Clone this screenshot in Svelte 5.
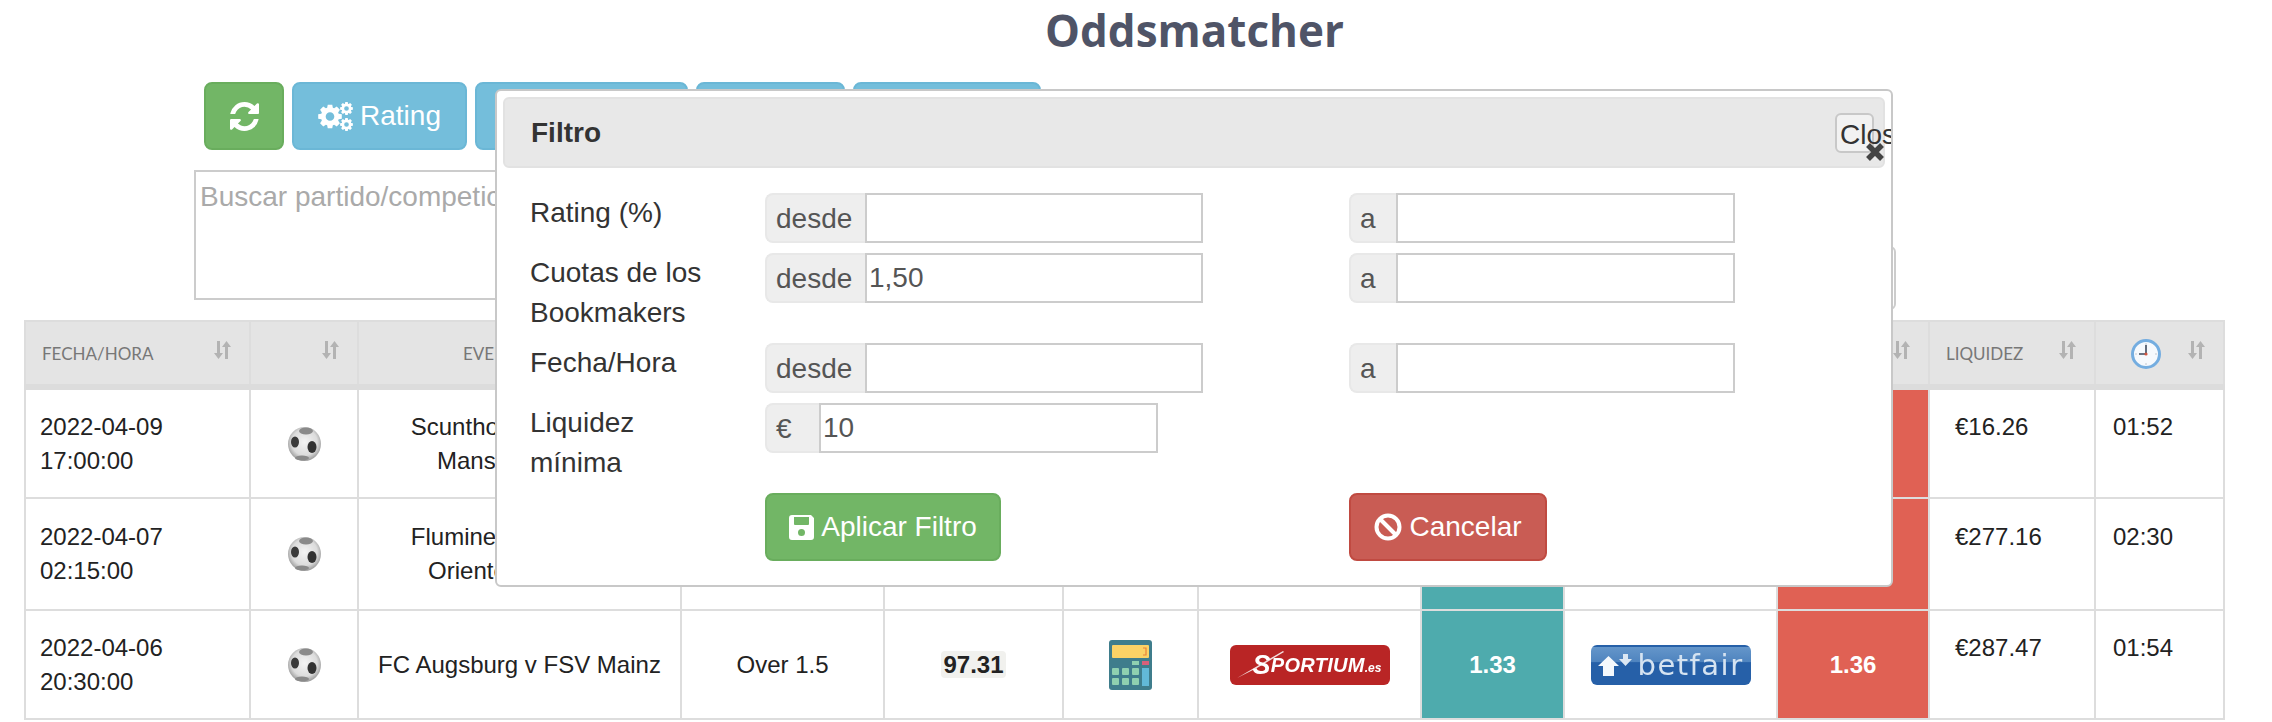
<script>
  const columns = [
    { label: 'Fecha/Hora', align: 'left' },
    { label: '', align: 'left' },
    { label: 'Evento', align: 'center' },
    { label: 'Mercado', align: 'center' },
    { label: 'Rating', align: 'center' },
    { label: '', align: 'center' },
    { label: 'Bookmaker', align: 'center' },
    { label: 'Cuota', align: 'center' },
    { label: 'Exchange', align: 'center' },
    { label: 'Cuota', align: 'center' },
    { label: 'Liquidez', align: 'left' },
    { label: 'clock', align: 'center' }
  ];

  const rows = [
    { date: '2022-04-09', time: '17:00:00', event: 'Scunthorpe United v Mansfield Town', market: 'Over 1.5', rating: '96.84', back: '1.30', lay: '1.34', liquidity: '€16.26', left: '01:52' },
    { date: '2022-04-07', time: '02:15:00', event: 'Fluminense FC RJ v Oriente Petrolero', market: 'Over 1.5', rating: '97.02', back: '1.29', lay: '1.33', liquidity: '€277.16', left: '02:30' },
    { date: '2022-04-06', time: '20:30:00', event: 'FC Augsburg v FSV Mainz', market: 'Over 1.5', rating: '97.31', back: '1.33', lay: '1.36', liquidity: '€287.47', left: '01:54' }
  ];

  const filters = [
    { label: 'Rating (%)', from: '', to: '' },
    { label: 'Cuotas de los Bookmakers', from: '1,50', to: '' },
    { label: 'Fecha/Hora', from: '', to: '' }
  ];

  // cog outline with a round hole, used by the Rating button
  function gear(cx, cy, r, teeth) {
    const pts = [];
    const step = (Math.PI * 2) / teeth;
    for (let i = 0; i < teeth; i++) {
      const a = i * step;
      const w = step * 0.24;
      const inner = r * 0.76;
      pts.push([a - step / 2 + w * 0.4, inner], [a - w, r], [a + w, r], [a + step / 2 - w * 0.4, inner]);
    }
    const d = pts
      .map(([a, rad], i) => `${i ? 'L' : 'M'}${(cx + Math.cos(a) * rad).toFixed(2)} ${(cy + Math.sin(a) * rad).toFixed(2)}`)
      .join('');
    const h = r * 0.36;
    return `${d}ZM${cx - h} ${cy}a${h} ${h} 0 1 0 ${h * 2} 0a${h} ${h} 0 1 0 ${-h * 2} 0Z`;
  }

  const refreshPath =
    'M1639 1056q0 5-1 7-64 268-268 434.5t-478 166.5q-146 0-282.5-55t-243.5-157l-129 129q-19 19-45 19t-45-19-19-45v-448q0-26 19-45t45-19h448q26 0 45 19t19 45-19 45l-137 137q71 66 161 102t187 36q134 0 250-65t186-179q11-17 53-117 8-23 30-23h192q13 0 22.5 9.5t9.5 22.5zm25-800v448q0 26-19 45t-45 19h-448q-26 0-45-19t-19-45 19-45l138-138q-148-137-349-137-134 0-250 65t-186 179q-11 17-53 117-8 23-30 23h-199q-13 0-22.5-9.5t-9.5-22.5v-7q65-268 270-434.5t480-166.5q146 0 284 55.5t245 156.5l130-129q19-19 45-19t45 19 19 45z';
</script>

{#snippet sortIcon()}
  <svg class="sort" viewBox="0 0 17 18" aria-hidden="true">
    <path d="M3 0h3v12h3l-4.5 6L0 12h3z" />
    <path d="M11 18h3V6h3L12.500 0 8 6h3z" />
  </svg>
{/snippet}

{#snippet clock()}
  <svg class="clock" viewBox="0 0 30 30" aria-hidden="true">
    <circle cx="15" cy="15" r="13.500" fill="#f6f9fd" stroke="#74ade0" stroke-width="3" />
    <path d="M15 4v2M15 24v2M4 15h2M24 15h2" stroke="#c4c8cf" stroke-width="1" />
    <path d="M15 6v9H8" fill="none" stroke="#3f4a5c" stroke-width="1.600" />
    <circle cx="15" cy="15" r="1.600" fill="#d2553f" />
  </svg>
{/snippet}

{#snippet ball()}
  <svg class="ball" viewBox="0 0 33 34" aria-hidden="true">
    <defs>
      <radialGradient id="ballShade" cx="50%" cy="45%" r="55%">
        <stop offset="0%" stop-color="#f4f4f4" />
        <stop offset="70%" stop-color="#dcdcdc" />
        <stop offset="100%" stop-color="#9a9a9a" />
      </radialGradient>
    </defs>
    <ellipse cx="16.500" cy="17" rx="16.500" ry="17" fill="url(#ballShade)" />
    <ellipse cx="18" cy="4" rx="7" ry="3.500" fill="#8a8a8a" />
    <ellipse cx="7" cy="15" rx="4" ry="5.500" fill="#3a3a3a" />
    <ellipse cx="24" cy="20" rx="4.500" ry="6" fill="#333" />
    <ellipse cx="14" cy="31" rx="7" ry="2.500" fill="#8a8a8a" />
  </svg>
{/snippet}

{#snippet calculator()}
  <svg class="calc" viewBox="0 0 43 50" aria-hidden="true">
    <rect width="43" height="50" rx="3" fill="#3f7d8c" />
    <rect x="3" y="5" width="37" height="13" rx="1" fill="#fbd266" />
    <path d="M34 8h3v7h-3" fill="none" stroke="#e8833a" stroke-width="1.200" />
    <rect x="23" y="21" width="7" height="4" fill="#8fd0b0" />
    <rect x="33" y="21" width="7" height="4" fill="#d9607a" />
    {#each [0, 1] as row}
      {#each [0, 1, 2] as col}
        <rect x={3 + col * 10} y={28 + row * 10} width="7" height="7" rx="1" fill="#8fd0b0" />
      {/each}
    {/each}
    <rect x="33" y="28" width="7" height="18" fill="#62b9d8" />
  </svg>
{/snippet}

<div class="page">
  <h1>Oddsmatcher</h1>

  <div class="toolbar">
    <button class="btn btn-green refresh" type="button" aria-label="Actualizar">
      <svg class="icon-refresh" viewBox="128 128 1536 1536" aria-hidden="true"><path d={refreshPath} /></svg>
    </button>
    <button class="btn btn-blue rating" type="button">
      <svg class="icon-cogs" viewBox="0 0 35 29" aria-hidden="true">
        <path fill-rule="evenodd" d={gear(12, 14.500, 12, 8)} />
        <path fill-rule="evenodd" d={gear(28.500, 6.500, 6.500, 8)} />
        <path fill-rule="evenodd" d={gear(28.500, 22.500, 6.500, 8)} />
      </svg>
      Rating
    </button>
    <button class="btn btn-blue bookies" type="button">Bookmakers</button>
    <button class="btn btn-blue filter" type="button">Filtro</button>
    <button class="btn btn-blue export" type="button">Exportar</button>
  </div>

  <div class="search">
    <textarea placeholder="Buscar partido/competición"></textarea>
    <div class="search-side"></div>
  </div>

  <table>
    <thead>
      <tr>
        {#each columns as col}
          <th class={col.align}>
            {#if col.label === 'clock'}
              {@render clock()}
            {:else}
              {col.label}
            {/if}
            {@render sortIcon()}
          </th>
        {/each}
      </tr>
    </thead>
    <tbody>
      {#each rows as row}
        <tr>
          <td>{row.date}<br />{row.time}</td>
          <td class="center mid">{@render ball()}</td>
          <td class="center mid event">{row.event}</td>
          <td class="center mid">{row.market}</td>
          <td class="center mid"><b class="score">{row.rating}</b></td>
          <td class="center mid">{@render calculator()}</td>
          <td class="center mid">
            <span class="logo sportium">
              <svg viewBox="0 0 48 28" aria-hidden="true"><path d="M0 28 46 1l1 1L20 18z" fill="#f3dede" /></svg>
              <i class="big-s">S</i><i>PORTIUM</i><small>.es</small>
            </span>
          </td>
          <td class="center mid odds back">{row.back}</td>
          <td class="center mid">
            <span class="logo betfair">
              <svg viewBox="0 0 34 22" aria-hidden="true">
                <path d="M0 12 10.500 2 21 12h-5v10H5V12z" fill="#f4f8fc" />
                <path d="M25 0h5v5h4l-6.500 7L21 5h4z" fill="#dbe7f3" />
              </svg>
              <span>betfair</span>
            </span>
          </td>
          <td class="center mid odds lay">{row.lay}</td>
          <td>{row.liquidity}</td>
          <td>{row.left}</td>
        </tr>
      {/each}
    </tbody>
  </table>

  <div class="modal">
    <header>
      <span>Filtro</span>
      <button class="close" type="button">Close</button>
      <svg class="close-x" viewBox="0 0 20 20" aria-hidden="true">
        <path d="M3 3l14 14M17 3L3 17" stroke="#444" stroke-width="5.500" />
      </svg>
    </header>
    <form class="fields">
      {#each filters as f}
        <span class="field-label">{f.label}</span>
        <div class="group from">
          <span class="addon">desde</span>
          <input type="text" value={f.from} />
        </div>
        <div class="group to">
          <span class="addon">a</span>
          <input type="text" value={f.to} />
        </div>
      {/each}
      <span class="field-label">Liquidez mínima</span>
      <div class="group liquidity">
        <span class="addon">€</span>
        <input type="text" value="10" />
      </div>
      <span></span>
      <span></span>
      <button class="btn btn-green apply" type="button">
        <svg class="icon-save" viewBox="0 0 25 25" aria-hidden="true">
          <path fill-rule="evenodd" d="M3 0h19l3 3v19a3 3 0 0 1-3 3H3a3 3 0 0 1-3-3V3a3 3 0 0 1 3-3zM5 2v7a1 1 0 0 0 1 1h13a1 1 0 0 0 1-1V2zM12.500 14a3.500 3.500 0 1 0 0 7a3.500 3.500 0 0 0 0-7z" />
        </svg>
        Aplicar Filtro
      </button>
      <button class="btn btn-red cancel" type="button">
        <svg class="icon-ban" viewBox="0 0 28 28" aria-hidden="true">
          <circle cx="14" cy="14" r="11.500" fill="none" stroke="#fff" stroke-width="4" />
          <path d="M6 6l16 16" stroke="#fff" stroke-width="4" />
        </svg>
        Cancelar
      </button>
    </form>
  </div>
</div>

<style>
  :global(body) {
    margin: 0;
    background: #fff;
  }
  .page {
    position: relative;
    width: 2272px;
    height: 722px;
    overflow: hidden;
    font-family: "Liberation Sans", Arial, sans-serif;
    font-size: 28px;
    line-height: 40px;
    color: #333;
  }
  h1 {
    margin: 0;
    padding: 6px 0 27px 117px;
    height: 49px;
    text-align: center;
    font-family: "Open Sans", sans-serif;
    font-size: 44px;
    line-height: 49px;
    font-weight: 700;
    color: #4f5467;
  }
  .toolbar {
    display: flex;
    gap: 8px;
    padding-left: 204px;
    height: 68px;
  }
  .btn {
    display: inline-flex;
    align-items: center;
    justify-content: center;
    gap: 7px;
    height: 68px;
    padding: 0;
    box-sizing: border-box;
    border: 2px solid transparent;
    border-radius: 8px;
    font: inherit;
    color: #fff;
  }
  .btn-green {
    background: #72b666;
    border-color: #69ad5d;
  }
  .btn-blue {
    background: #74bedb;
    border-color: #6bb7d6;
  }
  .btn-red {
    background: #c95c54;
    border-color: #c04a41;
  }
  .refresh { width: 80px; }
  .rating { width: 175px; }
  .bookies { width: 213px; }
  .filter { width: 149px; }
  .export { width: 188px; }
  .icon-refresh {
    width: 29px;
    height: 29px;
    fill: #fff;
  }
  .icon-cogs {
    width: 35px;
    height: 29px;
    fill: #fff;
  }
  .search {
    display: flex;
    gap: 24px;
    margin: 20px 0 0 194px;
    width: 1702px;
    height: 130px;
  }
  textarea {
    flex: 1;
    box-sizing: border-box;
    height: 130px;
    padding: 5px 4px;
    border: 2px solid #ccc;
    border-radius: 0;
    resize: none;
    font: inherit;
  }
  textarea::placeholder {
    color: #aaa;
    opacity: 1;
  }
  .search-side {
    width: 300px;
    height: 64px;
    margin-top: 76px;
    box-sizing: border-box;
    border: 2px solid #ccc;
    border-radius: 6px;
  }
  table {
    margin: 20px 0 0 24px;
    width: 2199px;
    table-layout: fixed;
    border-collapse: collapse;
    font-size: 24px;
    line-height: 34px;
    color: #222;
  }
  th, td {
    box-sizing: border-box;
    border: 2px solid #dddddd;
    padding: 20px 16px 19px;
    text-align: left;
    vertical-align: top;
  }
  tr:nth-child(2) td {
    padding-top: 21px;
    padding-bottom: 21px;
  }
  th {
    position: relative;
    height: 66px;
    padding: 2px 16px 0;
    background: #e4e4e4;
    border-bottom: 6px solid #dcdcdc;
    font-family: Lato, sans-serif;
    font-size: 17px;
    font-weight: 400;
    text-transform: uppercase;
    color: #777;
    vertical-align: middle;
  }
  th.center {
    text-align: center;
  }
  th:nth-child(1) { width: 225px; }
  th:nth-child(2) { width: 108px; }
  th:nth-child(3) { width: 323px; padding-right: 62px; }
  th:nth-child(4) { width: 203px; }
  th:nth-child(5) { width: 179px; }
  th:nth-child(6) { width: 135px; }
  th:nth-child(7) { width: 223px; }
  th:nth-child(8) { width: 143px; }
  th:nth-child(9) { width: 213px; }
  th:nth-child(10) { width: 152px; }
  th:nth-child(11) { width: 166px; }
  th:nth-child(12) { width: 129px; }
  td:nth-child(1) { padding-left: 14px; }
  td:nth-child(11) { padding-left: 25px; }
  td:nth-child(12) { padding-left: 17px; }
  .center {
    text-align: center;
  }
  .mid {
    vertical-align: middle;
  }
  tr td.mid {
    padding: 0 8px;
  }
  tr td.event {
    padding: 0 16px;
  }
  .sort {
    position: absolute;
    right: 18px;
    top: 19px;
    width: 17px;
    height: 18px;
    fill: #b3b3b3;
  }
  .clock {
    position: absolute;
    left: 35px;
    top: 17px;
    width: 30px;
    height: 30px;
  }
  .ball {
    display: block;
    margin: 0 auto;
    width: 33px;
    height: 34px;
    filter: blur(0.7px);
  }
  .calc {
    display: block;
    margin: 0 auto;
    width: 43px;
    height: 50px;
  }
  .score {
    padding: 0 2px;
    background: #f1f1ee;
    border-radius: 4px;
  }
  .odds {
    font-weight: 700;
    color: #fff;
  }
  .back { background: #4eabad; }
  .lay { background: #e06154; }
  .logo {
    position: relative;
    display: inline-flex;
    align-items: center;
    vertical-align: middle;
    box-sizing: border-box;
    width: 160px;
    height: 40px;
    border-radius: 6px;
    color: #fff;
  }
  .sportium {
    padding-left: 23px;
    background: #b92525;
    font-size: 20px;
    font-weight: 700;
  }
  .sportium svg {
    position: absolute;
    left: 7px;
    top: 5px;
    width: 48px;
    height: 28px;
    filter: blur(0.4px);
  }
  .sportium i {
    position: relative;
    letter-spacing: 0.3px;
    filter: blur(0.3px);
  }
  .sportium .big-s {
    font-size: 27px;
  }
  .sportium small {
    position: relative;
    top: 3px;
    font-size: 12px;
    font-style: italic;
    filter: blur(0.3px);
  }
  .betfair {
    gap: 6px;
    padding-left: 7px;
    background: linear-gradient(#2660a8 0, #2660a8 2px, #6596ca 2px, #4f84bf 42%, #2660a8 44%);
    font-family: "DejaVu Sans", sans-serif;
    font-size: 29px;
    line-height: 40px;
    letter-spacing: 1.5px;
    color: #d5e3f1;
  }
  .betfair svg {
    flex: none;
    width: 34px;
    height: 22px;
  }
  .betfair span {
    filter: blur(0.3px);
  }
  .modal {
    position: absolute;
    left: 495px;
    top: 89px;
    z-index: 10;
    box-sizing: border-box;
    width: 1398px;
    height: 498px;
    overflow: hidden;
    background: #fff;
    border: 2px solid #c8c8c8;
    border-radius: 6px;
  }
  header {
    position: relative;
    box-sizing: border-box;
    display: flex;
    align-items: center;
    justify-content: space-between;
    margin: 6px;
    height: 71px;
    padding: 0 9px 0 26px;
    background: #e8e8e8;
    border: 2px solid #e2e2e2;
    border-radius: 6px;
    font-weight: 700;
  }
  .close {
    box-sizing: border-box;
    width: 39px;
    height: 40px;
    padding: 0 0 0 3px;
    overflow: visible;
    white-space: nowrap;
    text-align: left;
    background: #f2f2f2;
    border: 2px solid #c8c8c8;
    border-radius: 6px;
    font: inherit;
    font-weight: 400;
    color: #333;
  }
  .close-x {
    position: absolute;
    right: -2px;
    top: 43px;
    width: 20px;
    height: 20px;
    filter: blur(0.5px);
  }
  .fields {
    display: grid;
    grid-template-columns: 235px 584px 1fr;
    gap: 10px 0;
    align-items: start;
    margin: 25px 0 0 33px;
  }
  .field-label {
    display: block;
    width: 190px;
  }
  .group {
    display: flex;
    height: 50px;
  }
  .from { width: 438px; }
  .to { width: 386px; }
  .liquidity { width: 393px; }
  .addon {
    flex: none;
    box-sizing: border-box;
    padding: 0 0 0 9px;
    height: 50px;
    line-height: 48px;
    background: #eee;
    border: 2px solid #e8e8e8;
    border-right: 0;
    border-radius: 8px 0 0 8px;
    color: #555;
  }
  .from .addon { width: 100px; }
  .to .addon { width: 47px; }
  .liquidity .addon { width: 54px; }
  input {
    flex: 1;
    min-width: 0;
    box-sizing: border-box;
    height: 50px;
    padding: 0 2px;
    border: 2px solid #ccc;
    border-radius: 0;
    font: inherit;
    color: #555;
    background: #fff;
  }
  .apply {
    width: 236px;
  }
  .cancel {
    width: 198px;
  }
  .icon-save {
    width: 25px;
    height: 25px;
    fill: #fff;
  }
  .icon-ban {
    width: 28px;
    height: 28px;
  }
</style>
